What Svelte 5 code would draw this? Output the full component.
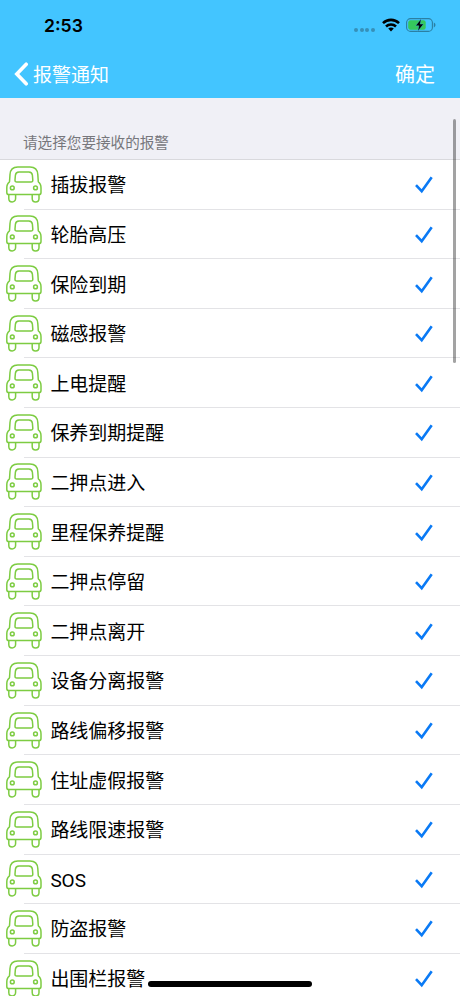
<script lang="ts">
	// alarm types the user can subscribe to
	let alarms = $state([
		'插拔报警',
		'轮胎高压',
		'保险到期',
		'磁感报警',
		'上电提醒',
		'保养到期提醒',
		'二押点进入',
		'里程保养提醒',
		'二押点停留',
		'二押点离开',
		'设备分离报警',
		'路线偏移报警',
		'住址虚假报警',
		'路线限速报警',
		'SOS',
		'防盗报警',
		'出围栏报警'
	].map((name) => ({ name, checked: true })));

	function toggle(i: number) {
		alarms[i].checked = !alarms[i].checked;
	}
</script>

<div class="screen">
	<header>
		<div class="status">
			<span class="time">2:53</span>
			<div class="indicators">
				<span class="dots"><i></i><i></i><i></i><i></i></span>
				<svg class="wifi" width="18" height="14" viewBox="0 0 18 14" fill="none" stroke="#000" stroke-width="2.6">
					<path d="M1 5.1C5.5.8 12.5.8 17 5.1" />
					<path d="M4 8.5C6.8 5.9 11.2 5.9 14 8.5" />
					<path d="M9 13.4 6.2 10.6C7.8 9.2 10.2 9.2 11.8 10.6Z" fill="#000" stroke="none" />
				</svg>
				<svg class="battery" width="30" height="14" viewBox="0 0 30 14">
					<rect x=".6" y=".6" width="25.8" height="12.8" rx="4" fill="none" stroke="#2b7fa3" stroke-width="1.1" />
					<rect x="2.2" y="2.2" width="17.5" height="9.6" rx="2.2" fill="#35c95c" />
					<path d="M27.8 4.6C30 5.4 30 8.6 27.8 9.4Z" fill="#2b7fa3" />
					<path d="M15.2.8 9.6 7.8H12.9L11.8 13.2 17.6 6.1H14.2Z" fill="#000" stroke="#43c5ff" stroke-width=".4" />
				</svg>
			</div>
		</div>
		<nav>
			<button class="back">
				<svg width="15" height="24" viewBox="0 0 15 24" fill="none" stroke="#fff" stroke-width="3.6" stroke-linecap="round" stroke-linejoin="miter">
					<path d="M12.2 2.2 2.8 12 12.2 21.8" />
				</svg>
				<span>报警通知</span>
			</button>
			<button class="confirm">确定</button>
		</nav>
	</header>

	<main>
		<h2>请选择您要接收的报警</h2>
		<ul>
			{#each alarms as alarm, i}
				<li>
					<button class="row" onclick={() => toggle(i)}>
						<svg class="car" width="36" height="37" viewBox="0 0 36 37" fill="none" stroke="#7dcc42" stroke-width="1.5" stroke-linejoin="round">
							<path d="M3.5 15.8 4 8.5C4.3 3.6 6.8 1 11.8 1H24C29 1 31.5 3.6 31.8 8.5L32.3 15.8C34.2 17 35 19.5 35 22V26.4C35 27.8 34.3 28.5 32.9 28.5H2.9C1.5 28.5.8 27.8.8 26.4V22C.8 19.5 1.6 17 3.5 15.8Z" />
							<path d="M13 6H22.8C25 6 26.2 7.2 26.4 9.2L26.8 14C26.9 15.4 26.3 16 25 16H10.8C9.5 16 8.9 15.4 9 14L9.4 9.2C9.6 7.2 10.8 6 13 6Z" />
							<circle cx="6.3" cy="21.9" r="1.9" />
							<circle cx="29.5" cy="21.9" r="1.9" />
							<path d="M2.8 28.5V32.4C2.8 37.1 9.6 37.1 9.6 32.4V28.5M26.2 28.5V32.4C26.2 37.1 33 37.1 33 32.4V28.5" />
						</svg>
						<span class="name">{alarm.name}</span>
						{#if alarm.checked}
							<svg class="check" width="18" height="18" viewBox="0 0 18 18" fill="none" stroke="#0a7af5" stroke-width="2.6">
								<path d="M1 9.2 6.7 15.2 16.7 1.2" />
							</svg>
						{/if}
					</button>
				</li>
			{/each}
		</ul>
	</main>

	<div class="scrollbar"></div>
	<div class="home-bar"></div>
</div>

<style>
	:global(body) {
		overflow: hidden;
	}

	.screen {
		position: relative;
		width: 460px;
		height: 996px;
		overflow: hidden;
		background: #fff;
		font-family: Inter, "Noto Sans CJK SC", sans-serif;
	}

	button {
		display: flex;
		align-items: center;
		padding: 0;
		border: 0;
		background: none;
		font: inherit;
		color: inherit;
	}

	header {
		height: 98px;
		background: #43c5ff;
	}

	.status {
		display: flex;
		justify-content: space-between;
		align-items: center;
		height: 50px;
		padding: 0 24px 0 44px;
	}

	.time {
		font-size: 17.6px;
		font-weight: 600;
		line-height: 20px;
		padding-top: 1px;
	}

	.indicators {
		display: flex;
		align-items: center;
	}

	.dots {
		display: flex;
		gap: 1.6px;
		margin: 9px 7px 0 0;
	}

	.dots i {
		width: 4px;
		height: 4px;
		border-radius: 50%;
		background: #3690b9;
	}

	.wifi {
		margin-right: 6px;
	}

	nav {
		display: flex;
		justify-content: space-between;
		height: 48px;
		padding: 0 25px 0 14px;
		color: #fff;
	}

	.back {
		gap: 4px;
		font-size: 19px;
	}

	.back span,
	.confirm {
		padding-bottom: 2px;
	}

	.confirm {
		font-size: 20px;
	}

	h2 {
		box-sizing: border-box;
		height: 62px;
		margin: 0;
		padding: 35px 0 0 23px;
		border-bottom: 1px solid #d9d9dd;
		background: #f0f0f6;
		color: #77777c;
		font-size: 14.6px;
		font-weight: 400;
		line-height: 20px;
	}

	ul {
		margin: 0;
		padding: 0;
		list-style: none;
	}

	li {
		height: 49.62px;
		background: linear-gradient(#e3e3e6, #e3e3e6) 24px 100% / 100% 1px no-repeat;
	}

	.row {
		width: 100%;
		height: 100%;
		padding: 0 27px 0 6px;
		text-align: left;
	}

	.car {
		margin-bottom: 1px;
	}

	.name {
		flex: 1;
		margin-left: 8.4px;
		padding-top: 3px;
		font-family: Roboto, "Noto Sans CJK SC", sans-serif;
		font-size: 19px;
		line-height: 28px;
		letter-spacing: -0.05px;
	}

	.check {
		margin-top: 1px;
	}

	.scrollbar {
		position: absolute;
		top: 119px;
		right: 4px;
		width: 3px;
		height: 244px;
		border-radius: 2px;
		background: rgba(0, 0, 0, 0.36);
	}

	.home-bar {
		position: absolute;
		left: 148px;
		bottom: 9px;
		width: 164px;
		height: 6px;
		border-radius: 3px;
		background: #000;
	}
</style>
